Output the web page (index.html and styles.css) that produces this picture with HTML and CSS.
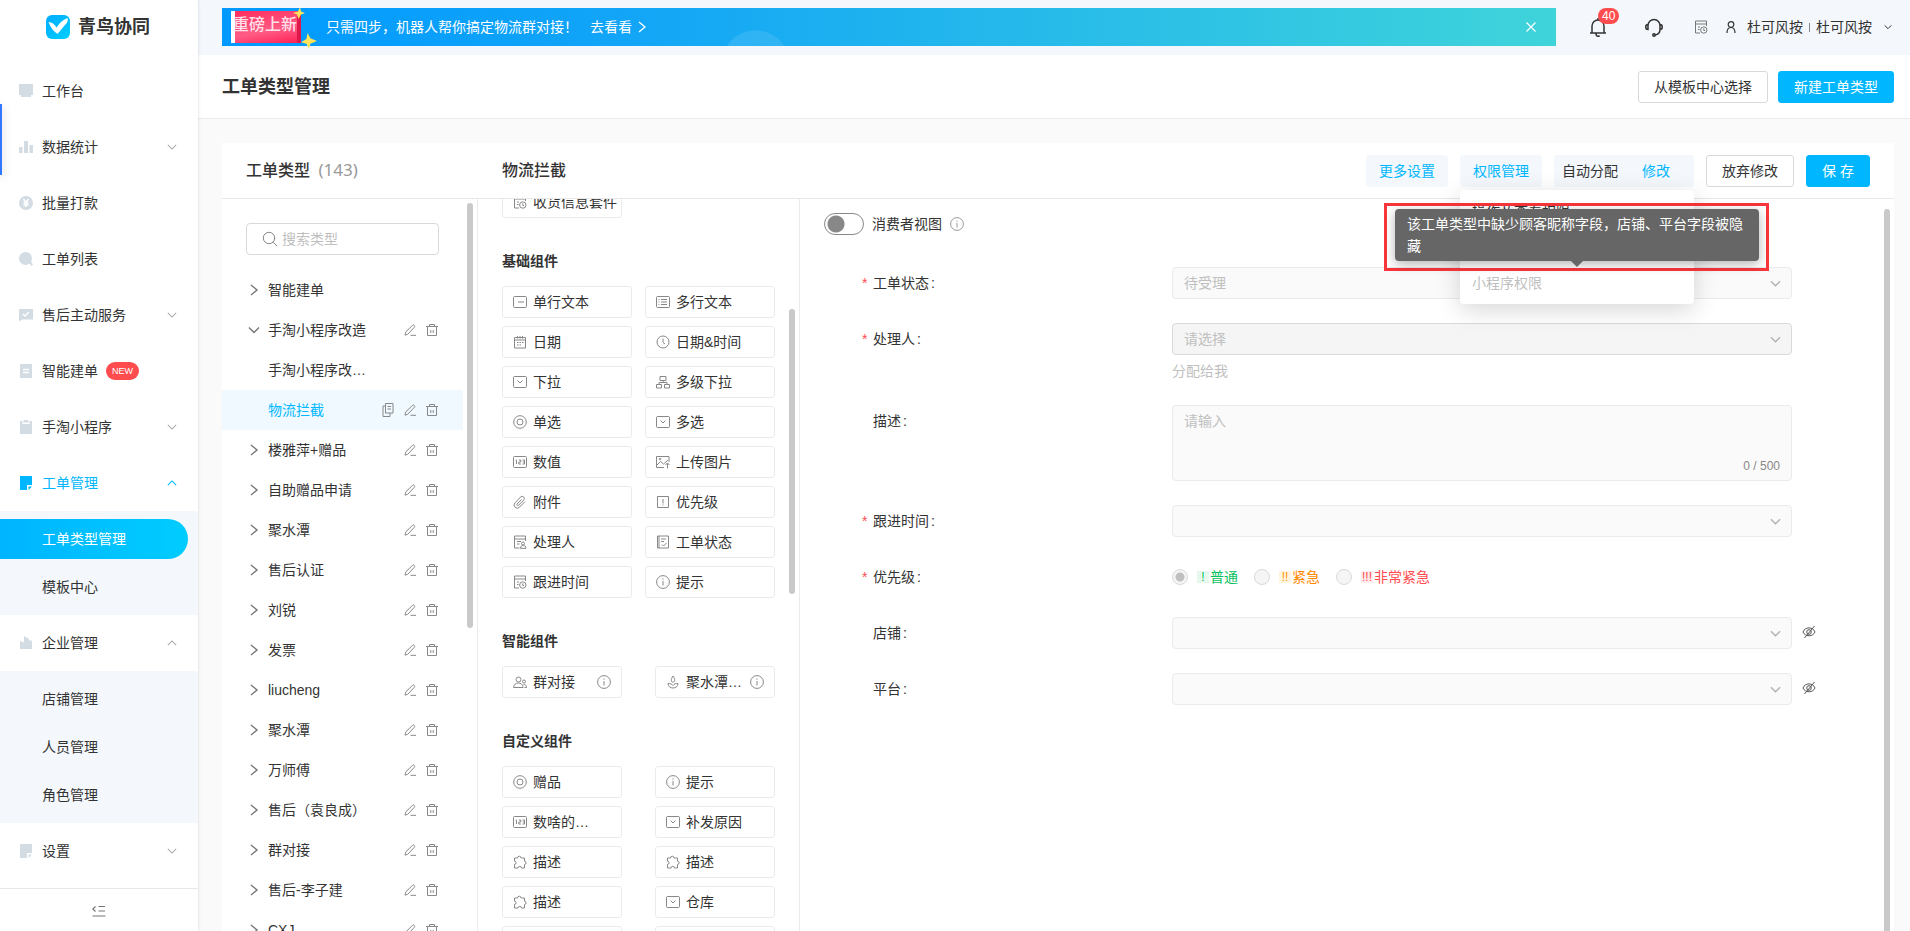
FILE: index.html
```
<!DOCTYPE html>
<html lang="zh-CN">
<head>
<meta charset="utf-8">
<title>工单类型管理</title>
<link rel="stylesheet" href="styles.css">
</head>
<body>
<svg class="sprite" aria-hidden="true">
  <symbol id="down" viewBox="0 0 12 12"><path d="M1 3.500l5 5 5-5"/></symbol>
  <symbol id="right" viewBox="0 0 12 12"><path d="M3 1l6 5-6 5"/></symbol>
  <symbol id="edit" viewBox="0 0 12 12"><path d="M1 11.200l.6-3L8.600 1.200a.9.9 0 0 1 1.300 0l.6.6a.9.9 0 0 1 0 1.300L3.800 10.200 1 11.200zM6.500 11.300H12"/></symbol>
  <symbol id="trash" viewBox="0 0 12 12"><path d="M0 2.500h12M3.500 2.500v-2h5v2M1.500 2.500v9h9v-9M4.800 6v3M7.200 6v3"/></symbol>
  <symbol id="copy" viewBox="0 0 12 14"><path d="M3.500.5h7.500v9.500H3.500zM3.500 3H1v10.500h7V10M5.500 3.500h3.500M5.500 6h3.500"/></symbol>
  <symbol id="search" viewBox="0 0 16 16"><circle cx="7" cy="7" r="5.700"/><path d="M11.200 11.200l4 4"/></symbol>
  <symbol id="single" viewBox="0 0 14 14"><rect x=".5" y="1.500" width="13" height="11" rx="1"/><path d="M5 7h6"/></symbol>
  <symbol id="multi" viewBox="0 0 14 14"><rect x=".5" y="1.500" width="13" height="11" rx="1"/><path d="M5 4.500h6M5 7h6M5 9.500h6M2.500 4.500h1M2.500 7h1M2.500 9.500h1"/></symbol>
  <symbol id="date" viewBox="0 0 14 14"><path d="M1.500 2.500h11v10.500h-11zM1.500 5h11M4.500 1v2.500M7 1v2.500M9.500 1v2.500M4 7.500h1.500M6.500 7.500H8M9 7.500h1.500M4 10h1.500M6.500 10H8"/></symbol>
  <symbol id="clock" viewBox="0 0 14 14"><circle cx="7" cy="7" r="6"/><path d="M7 3.500v4l2 1.500"/></symbol>
  <symbol id="drop" viewBox="0 0 14 14"><rect x=".5" y="1.500" width="13" height="11" rx="1"/><path d="M4.500 5.500L7 8l2.500-2.500"/></symbol>
  <symbol id="tree" viewBox="0 0 14 14"><path d="M4 1.500h6v4H4zM7 5.500v2M3 9.500v-2h8v2M.5 9.500h5v3.500h-5zM8.500 9.500h5v3.500h-5z"/></symbol>
  <symbol id="ring" viewBox="0 0 14 14"><circle cx="7" cy="7" r="6.300"/><circle cx="7" cy="7" r="3"/></symbol>
  <symbol id="num" viewBox="0 0 14 14"><rect x=".5" y="1.500" width="13" height="11" rx="1"/><path d="M3.500 5v4M2.800 5.500l.7-.5M5.800 5h2v2h-2v2h2M9.500 5h2v4h-2M9.800 7h1.700"/></symbol>
  <symbol id="image" viewBox="0 0 14 14"><path d="M8 12.500H.5v-11h12.500V7M.5 10.500l4-4L7.500 9 12 5M11.500 8v5.500M9.500 10l2-2 2 2"/><circle cx="4" cy="4" r=".8"/></symbol>
  <symbol id="clip" viewBox="0 0 14 14"><path d="M12 6.500l-5.500 5.700a3 3 0 0 1-4.500-4.300L7.500 2a2 2 0 0 1 3.200 3L5.500 10.300A1 1 0 0 1 4 9L8.500 4.500"/></symbol>
  <symbol id="prio" viewBox="0 0 14 14"><path d="M1.500 1.500h11v11h-11zM7 4v4.500M7 9.500v1"/></symbol>
  <symbol id="person" viewBox="0 0 14 14"><path d="M6.500 13H1.500V1h11v5M1.500 4h11M4 6.500h4M4 9h2.500"/><circle cx="10" cy="8.500" r="1.500"/><path d="M7.500 13.300c0-4 5.500-4 5.500 0z"/></symbol>
  <symbol id="state" viewBox="0 0 14 14"><path d="M1.500 1h11v12h-11zM3 1v12M5 4h5M5 6.500h3M6 9.500l1.500 1.500 3-3"/></symbol>
  <symbol id="follow" viewBox="0 0 14 14"><path d="M6 13H1.500V1h11v5M1.500 4h11M4 7h2M4 9.500h1.500"/><circle cx="9.800" cy="10" r="3.200"/><path d="M9.800 8.300V10.500h1.200"/></symbol>
  <symbol id="info" viewBox="0 0 14 14"><circle cx="7" cy="7" r="6.400"/><path d="M7 6v4.500M7 3.500v1.200"/></symbol>
  <symbol id="group" viewBox="0 0 14 14"><circle cx="5.500" cy="4.500" r="2.500"/><path d="M.6 12.500c0-6 9.500-6 9.500 0z"/><circle cx="11" cy="6.500" r="1.500"/><path d="M10.500 9.500c2 0 3 1 3 3h-2"/></symbol>
  <symbol id="juice" viewBox="0 0 14 14"><path d="M7 1C4.500 4.500 5 6.500 7 7.500 9 6.500 9.500 4.500 7 1zM2 8.500c0 6 10 6 10 0-2.500 0-4 .5-5 2-1-1.500-2.500-2-5-2z"/></symbol>
  <symbol id="puzzle" viewBox="0 0 14 14"><path d="M1.500 3H4.500a1.800 1.800 0 1 1 3.600 0H11.500v3.200a1.600 1.600 0 1 1 0 3.200V13H8.500a1.700 1.700 0 0 0-3.400 0H1.500V9.400a1.600 1.600 0 0 0 0-3.200z"/></symbol>
  <symbol id="eye" viewBox="0 0 14 14"><path d="M1 7c2-5.500 10-5.500 12 0-2 5-10 5-12 0zM12.500 1L2.500 13"/><circle cx="7" cy="7" r="2.300"/></symbol>
</svg>
<div class="app">
  <aside class="sidebar">
    <div class="logo">
      <svg class="logo-mark" viewBox="0 0 24 24"><defs><linearGradient id="lg" x1="0" y1="0" x2="1" y2="1"><stop offset="0" stop-color="#0af"/><stop offset="1" stop-color="#00d0ff"/></linearGradient></defs><rect width="24" height="24" rx="6" fill="url(#lg)"/><path d="M2.500 7c3.500.3 6 2 8 5.500C13.500 8 16.500 5 21.500 3 22.500 6 21 8 19 10l-7.500 9C8.500 17 4 12 2.500 7z" fill="#fff"/></svg>
      <span>青鸟协同</span>
    </div>
    <nav class="menu">
      <a class="item" href="#"><svg class="mi" viewBox="0 0 14 14"><path d="M1 0h12a1 1 0 0 1 1 1v10H0V1a1 1 0 0 1 1-1zM2 11h10v2H2z"/></svg>工作台</a>
      <a class="item" href="#"><svg class="mi" viewBox="0 0 14 14"><path d="M0 7h3.500v6H0zM5 1h4v12H5zM10.500 5H14v8h-3.500z"/></svg>数据统计<svg class="chev"><use href="#down"/></svg></a>
      <a class="item" href="#"><svg class="mi" viewBox="0 0 14 14"><circle cx="7" cy="7" r="7"/><path class="cut" d="M4.500 3L7 6.500 9.500 3M7 6.500V11M4.500 7h5M4.500 9h5"/></svg>批量打款</a>
      <a class="item" href="#"><svg class="mi" viewBox="0 0 14 14"><circle cx="6.500" cy="6.500" r="6.500"/><path d="M10 11l2-1.500 2 3-1.500 1.500z"/></svg>工单列表</a>
      <a class="item" href="#"><svg class="mi" viewBox="0 0 14 14"><path d="M0 1h14v10.500H3L0 13.500z"/><path class="cut" d="M4 6l2 2 4-4"/></svg>售后主动服务<svg class="chev"><use href="#down"/></svg></a>
      <a class="item" href="#"><svg class="mi" viewBox="0 0 14 14"><path d="M1 0h12v14H1z"/><path class="cut" d="M4 5.500h6M4 8.500h6"/></svg>智能建单<span class="new">NEW</span></a>
      <a class="item" href="#"><svg class="mi" viewBox="0 0 14 14"><path d="M1 1h2.500v3h7V1H13v13H1zM4.500 0h5v2.500h-5z"/></svg>手淘小程序<svg class="chev"><use href="#down"/></svg></a>
      <a class="item open" href="#"><svg class="mi" viewBox="0 0 14 14"><path d="M1 0h12v9H8v5H1zM9.500 10.500H13L9.500 14z"/></svg>工单管理<svg class="chev up"><use href="#down"/></svg></a>
      <div class="sub">
        <a class="subitem current" href="#">工单类型管理</a>
        <a class="subitem" href="#">模板中心</a>
      </div>
      <a class="item" href="#"><svg class="mi" viewBox="0 0 14 14"><path d="M1 5l4 1.500V0l5 3v1.500h3V13H1z"/></svg>企业管理<svg class="chev up"><use href="#down"/></svg></a>
      <div class="sub">
        <a class="subitem" href="#">店铺管理</a>
        <a class="subitem" href="#">人员管理</a>
        <a class="subitem" href="#">角色管理</a>
      </div>
      <a class="item" href="#"><svg class="mi" viewBox="0 0 14 14"><path d="M1 0h12v9H8v5H1zM9.500 10.500H13L9.500 14z"/></svg>设置<svg class="chev"><use href="#down"/></svg></a>
    </nav>
    <button class="fold" type="button" aria-label="收起菜单"><svg class="line" viewBox="0 0 14 12" width="14" height="12"><path d="M3.500 1.500L.8 4l2.700 2.500M6.500 1.500H13M6.500 6H13M.5 11H13.500"/></svg></button>
    <span class="edge"></span>
  </aside>

  <div class="page">
    <header class="topbar">
      <div class="banner">
        <span class="promo"><b>重磅上新</b>
          <svg class="star s1" viewBox="0 0 12 12"><path d="M7 0l1 4.500 4 1.500-4 1.500L5.500 12 4 7.500 0 6l5-1.500z"/></svg>
          <svg class="star s2" viewBox="0 0 12 12"><path d="M5 0l2 4 5 2-5 2-1 4-2-4-4-1 4-2.500z"/></svg>
        </span>
        <span class="promo-text">只需四步，机器人帮你搞定物流群对接！</span>
        <a class="promo-link" href="#">去看看<svg class="line" width="12" height="12"><use href="#right"/></svg></a>
        <button class="close" type="button" aria-label="关闭"><svg class="line" viewBox="0 0 10 10" width="10" height="10"><path d="M.5.5l9 9M9.500.5l-9 9"/></svg></button>
      </div>
      <div class="tools">
        <button class="tool bell" type="button" aria-label="消息"><svg class="line" viewBox="0 0 18 20" width="18" height="20"><path d="M1 16h16M3 16V9a6 6 0 0 1 12 0v7M7.500 16.500a1.500 1.500 0 0 0 3 2M9 1v2"/></svg><span class="badge">40</span></button>
        <button class="tool" type="button" aria-label="客服"><svg class="line" viewBox="0 0 18 20" width="18" height="20"><path d="M3 12V8.500a6 6 0 0 1 12 0V12M3 7.500c-3 0-3 5 0 5zM15 7.500c3 0 3 5 0 5zM15 12.500c0 3-2 5-5 5.500"/><circle cx="9" cy="18" r="1.200"/></svg></button>
        <button class="tool pale" type="button" aria-label="记录"><svg class="line" width="14" height="14"><use href="#follow"/></svg></button>
        <button class="account" type="button"><svg class="line" viewBox="0 0 10 12" width="10" height="12"><circle cx="5" cy="3.500" r="2.800"/><path d="M1 12c0-3.500 1-5.500 4-5.500S9 8.500 9 12"/></svg><span>杜可风按</span><i></i><span>杜可风按</span><svg class="line small" width="8" height="8"><use href="#down"/></svg></button>
      </div>
    </header>
    <div class="titlebar">
      <h1>工单类型管理</h1>
      <button class="btn" type="button">从模板中心选择</button>
      <button class="btn primary" type="button">新建工单类型</button>
    </div>

    <main class="panel">
      <div class="panel-head">
        <h2 class="left-title">工单类型 <span>(143)</span></h2>
        <h2>物流拦截</h2>
        <div class="actions">
          <button class="btn soft" type="button">更多设置</button>
          <div class="perm">
            <button class="btn soft" type="button">权限管理</button>
            <div class="popup">
              <a href="#">操作及查看权限</a>
              <a class="off" href="#">小程序权限</a>
              <div class="tip-frame"><div class="tip" role="tooltip">该工单类型中缺少顾客昵称字段，店铺、平台字段被隐藏</div></div>
            </div>
          </div>
          <div class="auto"><span>自动分配</span><a href="#">修改</a></div>
          <button class="btn" type="button">放弃修改</button>
          <button class="btn primary save" type="button">保 存</button>
        </div>
      </div>

      <div class="cols">
        <section class="types">
          <label class="search"><svg class="line" width="16" height="16"><use href="#search"/></svg><input type="text" placeholder="搜索类型" aria-label="搜索类型"></label>
          <ul class="tree">
            <li><svg class="arrow"><use href="#right"/></svg><span>智能建单</span></li>
            <li><svg class="arrow"><use href="#down"/></svg><span>手淘小程序改造</span><svg class="act"><use href="#edit"/></svg><svg class="act"><use href="#trash"/></svg></li>
            <li class="leaf"><span>手淘小程序改…</span></li>
            <li class="leaf selected"><span>物流拦截</span><svg class="act tall"><use href="#copy"/></svg><svg class="act"><use href="#edit"/></svg><svg class="act"><use href="#trash"/></svg></li>
            <li><svg class="arrow"><use href="#right"/></svg><span>楼雅萍+赠品</span><svg class="act"><use href="#edit"/></svg><svg class="act"><use href="#trash"/></svg></li>
            <li><svg class="arrow"><use href="#right"/></svg><span>自助赠品申请</span><svg class="act"><use href="#edit"/></svg><svg class="act"><use href="#trash"/></svg></li>
            <li><svg class="arrow"><use href="#right"/></svg><span>聚水潭</span><svg class="act"><use href="#edit"/></svg><svg class="act"><use href="#trash"/></svg></li>
            <li><svg class="arrow"><use href="#right"/></svg><span>售后认证</span><svg class="act"><use href="#edit"/></svg><svg class="act"><use href="#trash"/></svg></li>
            <li><svg class="arrow"><use href="#right"/></svg><span>刘锐</span><svg class="act"><use href="#edit"/></svg><svg class="act"><use href="#trash"/></svg></li>
            <li><svg class="arrow"><use href="#right"/></svg><span>发票</span><svg class="act"><use href="#edit"/></svg><svg class="act"><use href="#trash"/></svg></li>
            <li><svg class="arrow"><use href="#right"/></svg><span>liucheng</span><svg class="act"><use href="#edit"/></svg><svg class="act"><use href="#trash"/></svg></li>
            <li><svg class="arrow"><use href="#right"/></svg><span>聚水潭</span><svg class="act"><use href="#edit"/></svg><svg class="act"><use href="#trash"/></svg></li>
            <li><svg class="arrow"><use href="#right"/></svg><span>万师傅</span><svg class="act"><use href="#edit"/></svg><svg class="act"><use href="#trash"/></svg></li>
            <li><svg class="arrow"><use href="#right"/></svg><span>售后（袁良成）</span><svg class="act"><use href="#edit"/></svg><svg class="act"><use href="#trash"/></svg></li>
            <li><svg class="arrow"><use href="#right"/></svg><span>群对接</span><svg class="act"><use href="#edit"/></svg><svg class="act"><use href="#trash"/></svg></li>
            <li><svg class="arrow"><use href="#right"/></svg><span>售后-李子建</span><svg class="act"><use href="#edit"/></svg><svg class="act"><use href="#trash"/></svg></li>
            <li><svg class="arrow"><use href="#right"/></svg><span>CXJ</span><svg class="act"><use href="#edit"/></svg><svg class="act"><use href="#trash"/></svg></li>
          </ul>
          <span class="thumb t-left"></span>
        </section>

        <section class="parts">
          <div class="parts-scroll">
            <div class="grid narrow">
              <button class="part" type="button"><svg><use href="#follow"/></svg><span>收货信息套件</span></button>
            </div>
            <h3>基础组件</h3>
            <div class="grid">
              <button class="part" type="button"><svg><use href="#single"/></svg><span>单行文本</span></button>
              <button class="part" type="button"><svg><use href="#multi"/></svg><span>多行文本</span></button>
              <button class="part" type="button"><svg><use href="#date"/></svg><span>日期</span></button>
              <button class="part" type="button"><svg><use href="#clock"/></svg><span>日期&amp;时间</span></button>
              <button class="part" type="button"><svg><use href="#drop"/></svg><span>下拉</span></button>
              <button class="part" type="button"><svg><use href="#tree"/></svg><span>多级下拉</span></button>
              <button class="part" type="button"><svg><use href="#ring"/></svg><span>单选</span></button>
              <button class="part" type="button"><svg><use href="#drop"/></svg><span>多选</span></button>
              <button class="part" type="button"><svg><use href="#num"/></svg><span>数值</span></button>
              <button class="part" type="button"><svg><use href="#image"/></svg><span>上传图片</span></button>
              <button class="part" type="button"><svg><use href="#clip"/></svg><span>附件</span></button>
              <button class="part" type="button"><svg><use href="#prio"/></svg><span>优先级</span></button>
              <button class="part" type="button"><svg><use href="#person"/></svg><span>处理人</span></button>
              <button class="part" type="button"><svg><use href="#state"/></svg><span>工单状态</span></button>
              <button class="part" type="button"><svg><use href="#follow"/></svg><span>跟进时间</span></button>
              <button class="part" type="button"><svg><use href="#info"/></svg><span>提示</span></button>
            </div>
            <h3>智能组件</h3>
            <div class="grid narrow">
              <button class="part" type="button"><svg><use href="#group"/></svg><span>群对接</span><svg class="hint"><use href="#info"/></svg></button>
              <button class="part" type="button"><svg><use href="#juice"/></svg><span>聚水潭…</span><svg class="hint"><use href="#info"/></svg></button>
            </div>
            <h3>自定义组件</h3>
            <div class="grid narrow">
              <button class="part" type="button"><svg><use href="#ring"/></svg><span>赠品</span></button>
              <button class="part" type="button"><svg><use href="#info"/></svg><span>提示</span></button>
              <button class="part" type="button"><svg><use href="#num"/></svg><span>数啥的…</span></button>
              <button class="part" type="button"><svg><use href="#drop"/></svg><span>补发原因</span></button>
              <button class="part" type="button"><svg><use href="#puzzle"/></svg><span>描述</span></button>
              <button class="part" type="button"><svg><use href="#puzzle"/></svg><span>描述</span></button>
              <button class="part" type="button"><svg><use href="#puzzle"/></svg><span>描述</span></button>
              <button class="part" type="button"><svg><use href="#drop"/></svg><span>仓库</span></button>
              <button class="part" type="button" aria-label="组件"></button>
              <button class="part" type="button" aria-label="组件"></button>
            </div>
          </div>
          <span class="thumb t-mid"></span>
        </section>

        <section class="preview">
          <label class="view"><input class="switch" type="checkbox">消费者视图<svg class="line" width="14" height="14"><use href="#info"/></svg></label>
          <form class="form">
            <div class="row"><label class="req" for="f1">工单状态<i>:</i></label><div class="field"><select id="f1" disabled><option>待受理</option></select><svg class="fchev"><use href="#down"/></svg></div></div>
            <div class="row"><label class="req" for="f2">处理人<i>:</i></label><div class="field dark"><select id="f2" disabled><option>请选择</option></select><svg class="fchev"><use href="#down"/></svg><span class="assign">分配给我</span></div></div>
            <div class="row"><label for="f3">描述<i>:</i></label><div class="field"><textarea id="f3" placeholder="请输入" disabled></textarea><span class="count">0 / 500</span></div></div>
            <div class="row"><label class="req" for="f4">跟进时间<i>:</i></label><div class="field"><select id="f4" disabled></select><svg class="fchev"><use href="#down"/></svg></div></div>
            <div class="row"><span class="req">优先级<i>:</i></span><div class="radios">
              <label><input type="radio" name="p" checked disabled><b class="green">!</b><span class="c-green">普通</span></label>
              <label><input type="radio" name="p" disabled><b class="orange">!!</b><span class="c-orange">紧急</span></label>
              <label><input type="radio" name="p" disabled><b class="red">!!!</b><span class="c-red">非常紧急</span></label>
            </div></div>
            <div class="row"><label for="f5">店铺<i>:</i></label><div class="field"><select id="f5" disabled></select><svg class="fchev"><use href="#down"/></svg></div><svg class="eye"><use href="#eye"/></svg></div>
            <div class="row"><label for="f6">平台<i>:</i></label><div class="field"><select id="f6" disabled></select><svg class="fchev"><use href="#down"/></svg></div><svg class="eye"><use href="#eye"/></svg></div>
          </form>
          <span class="thumb t-right"></span>
        </section>
      </div>
    </main>
  </div>
</div>
</body>
</html>
```
FILE: styles.css
```
* { box-sizing: border-box; }
body { margin: 0; font-family: "Liberation Sans", "Noto Sans CJK SC", sans-serif; font-size: 14px; line-height: 22px; color: #333; }
button, input, select, textarea { font: inherit; color: inherit; }
button { cursor: pointer; }
a { color: inherit; text-decoration: none; }
h1, h2, h3, ul { margin: 0; padding: 0; }
.sprite { display: none; }
svg { flex: none; }
.line, .chev, .arrow, .act, .part svg, .fchev, .eye { fill: none; stroke: currentColor; stroke-width: 1; }

.app { display: flex; height: 100vh; overflow: hidden; background: #fafafa; }

/* sidebar */
.sidebar { position: relative; flex: none; display: flex; flex-direction: column; width: 198px; background: #fff; box-shadow: 0 0 3px rgba(0, 0, 0, .15); z-index: 1; }
.logo { display: flex; align-items: center; gap: 8px; height: 63px; padding: 0 0 9px 46px; font-size: 18px; font-weight: 600; }
.logo-mark { width: 24px; height: 24px; }
.menu { flex: 1; }
.item { display: flex; align-items: center; height: 56px; padding: 0 21px 0 19px; }
.mi { width: 14px; height: 14px; margin-right: 9px; fill: #d3dce3; }
.mi .cut { fill: none; stroke: #fff; stroke-width: 1.5; }
.chev { width: 10px; height: 10px; margin-left: auto; color: #aaa; stroke-width: 1.3; }
.up { transform: rotate(180deg); }
.open { color: #00b7ff; }
.open .mi { fill: #00b7ff; }
.open .chev { color: #00b7ff; }
.new { margin-left: 8px; padding: 0 6px; border-radius: 9px; background: #ff4d4f; color: #fff; font-size: 9px; line-height: 18px; }
.sub { display: flex; flex-direction: column; gap: 8px; padding: 8px 10px 8px 0; background: #f4f8fc; }
.subitem { height: 40px; padding-left: 42px; line-height: 40px; border-radius: 0 20px 20px 0; }
.current { background: linear-gradient(90deg, #00b4ff, #00ccff); color: #fff; }
.fold { height: 43px; border: 0; border-top: 1px solid #e8e8e8; background: #fff; color: #777; }
.fold svg { margin-top: 8px; stroke-width: 1.2; }
.edge { position: absolute; left: 0; top: 104px; width: 2px; height: 71px; background: #3377ff; box-shadow: 0 2px 10px rgba(0, 0, 0, .3); }

/* header */
.page { flex: 1; display: flex; flex-direction: column; min-width: 0; }
.topbar { display: flex; align-items: center; height: 55px; padding: 0 18px 0 24px; background: #f4f8fc; }
.banner { flex: 1; display: flex; align-items: center; height: 38px; margin-top: -1px; padding: 0 20px 0 9px; background: radial-gradient(circle at 40% 150%, rgba(255, 255, 255, .1) 34px, transparent 35px), linear-gradient(90deg, #0099ff, #12a5f7 30%, #3fd4da); color: #fff; }
.promo { position: relative; flex: none; width: 70px; height: 32px; border-left: 4px solid #fff; background: linear-gradient(170deg, #ff2d5e, #ff5c85 60%, #ff2257); border-right: 4px solid #e0174a; text-align: center; line-height: 28px; }
.promo b { margin-left: -2px; font-size: 16px; font-weight: 500; color: #ffe0ea; white-space: nowrap; }
.star { position: absolute; fill: #ffe45c; }
.s1 { right: -8px; top: -4px; width: 12px; height: 12px; }
.s2 { right: -20px; bottom: -6px; width: 16px; height: 16px; }
.promo-text { margin-left: 25px; }
.promo-link { display: flex; align-items: center; gap: 4px; margin-left: 12px; }
.promo-link .line { stroke-width: 1.3; }
.close { margin-left: auto; padding: 0; border: 0; background: none; color: #fff; line-height: 0; }
.close .line { stroke-width: 1.2; }
.tools { display: flex; align-items: center; margin-top: -1px; }
.tool, .account { display: flex; align-items: center; padding: 0; border: 0; background: none; }
.tool { position: relative; margin-left: 38px; }
.tool svg { stroke-width: 1.5; }
.tool.bell { margin-left: 33px; }
.badge { position: absolute; left: 9px; top: -9px; min-width: 21px; padding: 0 4px; border-radius: 8px; background: #ff4d4f; color: #fff; font-size: 12px; line-height: 16px; }
.pale { margin-left: 31px; color: #777; }
.pale svg { stroke-width: 1; }
.account { margin-left: 18px; }
.account .line:first-child { margin-right: 11px; stroke-width: 1.2; }
.account i { width: 1px; height: 9px; margin: 0 6px; background: #888; }
.account .small { margin-left: 12px; stroke-width: 1.5; }
.titlebar { display: flex; align-items: center; gap: 10px; height: 64px; padding: 0 16px 0 24px; border-bottom: 1px solid #ebebeb; background: #fff; }
.titlebar h1 { margin-right: auto; font-size: 18px; font-weight: 600; }
.btn { height: 32px; padding: 0 15px; border: 1px solid #d9d9d9; border-radius: 3px; background: #fff; white-space: nowrap; line-height: 20px; }
.primary { border-color: #00b7ff; background: #00b7ff; color: #fff; }
.soft { padding: 0 12px; border-color: #f4f8fc; background: #f4f8fc; color: #00b7ff; }

/* panel */
.panel { flex: 1; display: flex; flex-direction: column; min-height: 0; margin: 24px 16px 0 24px; background: #fff; }
.panel-head { display: flex; align-items: center; height: 56px; padding: 0 24px; border-bottom: 1px solid #e8e8e8; }
.panel-head h2 { font-size: 16px; font-weight: 500; }
.panel-head .left-title { width: 256px; }
.left-title span { margin-left: 4px; font-family: "Noto Sans", sans-serif; font-size: 17px; font-weight: 400; color: #999; }
.actions { display: flex; gap: 12px; margin-left: auto; }
.actions .save { width: 64px; padding: 0; }
.perm { position: relative; }
.popup { position: absolute; left: 0; top: 35px; z-index: 2; display: flex; flex-direction: column; gap: 36px; width: 234px; padding: 3px 0; border-radius: 4px; background: #fff; box-shadow: 0 6px 24px rgba(0, 0, 0, .16); }
.popup a { padding: 0 12px; line-height: 36px; }
.popup .off { color: #bfbfbf; }
.tip-frame { position: absolute; left: -76px; top: 13px; width: 385px; padding: 3px 7px 7px 8px; border: 3px solid #f9363b; }
.tip { position: relative; min-height: 52px; padding: 4px 12px; border-radius: 4px; background: #666; color: #fff; box-shadow: 0 3px 12px rgba(0, 0, 0, .3); }
.tip::after { content: ""; position: absolute; left: 50%; top: 100%; margin-left: -6px; border: 6px solid transparent; border-top-color: #666; border-bottom-width: 0; }
.auto { display: flex; gap: 24px; width: 140px; padding: 0 8px; border-radius: 3px; background: #f4f8fc; line-height: 32px; }
.auto a { color: #00b7ff; }
.cols { flex: 1; display: flex; min-height: 0; }
.cols > section { position: relative; overflow: hidden; }
.thumb { position: absolute; width: 6px; border-radius: 3px; background: #c9c9c9; }
.types { flex: none; width: 256px; padding-top: 24px; border-right: 1px solid #ebebeb; }
.t-left { right: 4px; top: 4px; height: 425px; }
.search { display: flex; align-items: center; gap: 4px; width: 193px; height: 32px; margin: 0 0 15px 24px; padding-left: 15px; border: 1px solid #d9d9d9; border-radius: 4px; color: #888; }
.search input { flex: 1; min-width: 0; padding: 0; border: 0; outline: 0; background: none; }
::placeholder { color: #bfbfbf; opacity: 1; }
.tree { list-style: none; }
.tree li { display: flex; align-items: center; gap: 10px; height: 40px; width: 241px; padding: 0 25px 0 26px; }
.tree span { margin-right: auto; white-space: nowrap; }
.tree .leaf { padding-left: 46px; }
.arrow { width: 12px; height: 12px; margin-right: -2px; color: #777; stroke-width: 1.4; }
.act { width: 12px; height: 12px; color: #888; }
.tall { height: 14px; }
.selected { background: #f0f9ff; }
.selected span { color: #00b7ff; }

.parts { flex: none; width: 322px; border-right: 1px solid #ebebeb; }
.t-mid { right: 4px; top: 110px; height: 285px; }
.parts-scroll { margin-top: -13px; padding: 0 24px; }
.parts h3 { margin: 32px 0 14px; font-size: 14px; font-weight: 600; }
.grid { display: grid; grid-template-columns: 130px 130px; gap: 8px 13px; }
.narrow { grid-template-columns: 120px 120px; column-gap: 33px; }
.part { display: flex; align-items: center; gap: 6px; height: 32px; padding: 0 3px 0 10px; border: 1px solid #ebebeb; border-radius: 3px; background: #fff; }
.part svg { width: 14px; height: 14px; color: #888; }
.part span { white-space: nowrap; }
.part .hint { margin: 0 7px 0 auto; }

/* form */
.preview { flex: 1; padding: 14px 102px 0 24px; }
.t-right { right: 4px; top: 10px; height: 800px; }
.view { display: flex; align-items: center; width: max-content; }
.view .line { margin-left: 8px; color: #999; }
.switch { appearance: none; width: 40px; height: 22px; margin: 0 8px 0 0; border: 1px solid #888; border-radius: 11px; background: radial-gradient(circle at 11px 10px, #888 8px, transparent 9px); }
.form { display: flex; flex-direction: column; gap: 24px; margin-top: 32px; padding-left: 49px; }
.row { position: relative; display: grid; grid-template-columns: 299px 1fr; line-height: 32px; }
.row i { margin-left: 2px; font-style: normal; }
.req::before { content: "*"; float: left; width: 11px; margin-left: -11px; color: #ff4d4f; }
.field { position: relative; line-height: 22px; }
select, textarea { display: block; appearance: none; width: 100%; height: 32px; padding: 0 11px; border: 1px solid #ebebeb; border-radius: 4px; background: #fafafa; color: #bfbfbf; opacity: 1; }
textarea { height: 76px; padding: 4px 11px; resize: none; }
.dark select { border-color: #d9d9d9; background: #f5f5f5; }
.fchev { position: absolute; right: 11px; top: 11px; width: 11px; height: 11px; color: #b0b0b0; stroke-width: 1.4; }
.assign { display: block; padding-top: 5px; margin-bottom: -1px; color: #bfbfbf; }
.count { position: absolute; right: 12px; bottom: 4px; font-size: 12px; color: #888; }
.radios { display: flex; gap: 16px; }
.radios label { display: flex; align-items: center; }
.radios input { appearance: none; width: 16px; height: 16px; margin: 0 9px 0 0; border: 1px solid #d9d9d9; border-radius: 50%; background: #f5f5f5; }
.radios input:checked { background: radial-gradient(circle, #bfbfbf 4px, #f5f5f5 5px); }
.radios b { width: 12px; margin-right: 1px; font-size: 12px; font-weight: 400; line-height: 12px; text-align: center; }
.green { background: #e6f8ee; color: #07c160; }
.orange { background: #fff4e0; color: #ff9500; }
.red { background: #ffecec; color: #ff4d4f; }
.c-green { color: #07c160; }
.c-orange { color: #ff8800; }
.c-red { color: #ff4d4f; }
.eye { position: absolute; right: -24px; top: 8px; width: 14px; height: 14px; color: #555; }
```
